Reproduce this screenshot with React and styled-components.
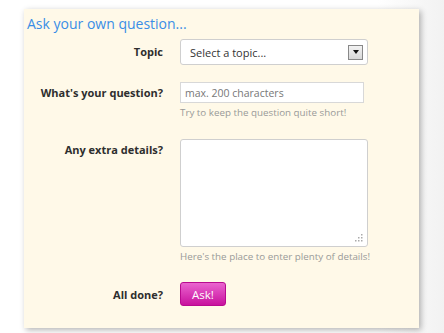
import React from 'react'
import styled, { createGlobalStyle } from 'styled-components'

const Global = createGlobalStyle`
  html, body {
    margin: 0;
    padding: 0;
    background: #ffffff;
    font-family: "Open Sans", "DejaVu Sans", sans-serif;
  }
`;

const Page = styled.div`
  width: 444px;
  height: 333px;
  padding: 9px 0 0 24px;
  box-sizing: border-box;
  background: linear-gradient(90deg, #ffffff 0%, #ffffff 85%, #f2f2f2 100%);
`;

const Panel = styled.div`
  width: 395px;
  height: 319px;
  box-sizing: border-box;
  background: #fff9e8;
  box-shadow: 2px 2px 6px rgba(0, 0, 0, 0.3);
  padding: 5px 0 0 3px;
`;

const Title = styled.h2`
  margin: 0;
  font-size: 14px;
  font-weight: 400;
  color: #3a8ee6;
  line-height: 20px;
`;

const Form = styled.form`
  display: grid;
  grid-template-columns: 136px 190px;
  column-gap: 17px;
  margin-top: 5px;
`;

const Label = styled.label`
  text-align: right;
  font-size: 11px;
  font-weight: 700;
  color: #2e2e2e;
  line-height: 14px;
  padding-top: ${p => p.$top || 0}px;
`;

const Field = styled.div`
  display: flex;
  flex-direction: column;
  margin-bottom: ${p => p.$gap || 0}px;
`;

const Select = styled.div`
  width: 188px;
  height: 26px;
  box-sizing: border-box;
  border: 1px solid #cfcfcf;
  border-radius: 3px;
  background: #fff;
  display: flex;
  align-items: center;
  justify-content: space-between;
  padding: 0 4px 0 9px;
  font-size: 11px;
  color: #333;
`;

const Arrow = styled.span`
  width: 15px;
  height: 15px;
  box-sizing: border-box;
  border: 1px solid #888;
  background: linear-gradient(#f2f2f2, #d8d8d8);
  display: flex;
  align-items: center;
  justify-content: center;
  &::after {
    content: '';
    border-left: 3px solid transparent;
    border-right: 3px solid transparent;
    border-top: 4px solid #111;
  }
`;

const Input = styled.input`
  width: 184px;
  height: 21px;
  box-sizing: border-box;
  border: 1px solid #d8d8d8;
  background: #fff;
  padding: 0 4px;
  font-family: inherit;
  font-size: 10.5px;
  color: #333;
  outline: none;
  &::placeholder {
    color: #777;
  }
`;

const Hint = styled.div`
  font-size: 9.8px;
  color: #999;
  margin-top: 4px;
  line-height: 12px;
  white-space: nowrap;
`;

const AreaWrap = styled.div`
  position: relative;
  width: 188px;
  height: 108px;
`;

const Area = styled.textarea`
  width: 100%;
  height: 100%;
  box-sizing: border-box;
  border: 1px solid #cfcfcf;
  border-radius: 3px;
  background: #fff;
  resize: none;
  outline: none;
`;

const Grip = styled.svg`
  position: absolute;
  right: 5px;
  bottom: 5px;
`;

const AskButton = styled.button`
  width: 46px;
  height: 24px;
  border: 1px solid #b80a8f;
  border-radius: 3px;
  background: linear-gradient(#ea64cf, #c8129e);
  color: #fff;
  font-family: inherit;
  font-size: 11.5px;
  padding: 0;
  cursor: pointer;
`;

const App = () => {
  return (
    <Page>
      <Global />
      <Panel>
        <Title>Ask your own question...</Title>
        <Form>
          <Label $top={6}>Topic</Label>
          <Field $gap={17}>
            <Select>
              <span>Select a topic...</span>
              <Arrow />
            </Select>
          </Field>

          <Label $top={4}>What's your question?</Label>
          <Field $gap={20}>
            <Input placeholder="max. 200 characters" />
            <Hint>Try to keep the question quite short!</Hint>
          </Field>

          <Label $top={4}>Any extra details?</Label>
          <Field $gap={19}>
            <AreaWrap>
              <Area />
              <Grip width="8" height="8" viewBox="0 0 8 8">
                <rect x="6" y="0" width="1.5" height="1.5" fill="#aaa" />
                <rect x="6" y="3" width="1.5" height="1.5" fill="#aaa" />
                <rect x="3" y="3" width="1.5" height="1.5" fill="#aaa" />
                <rect x="6" y="6" width="1.5" height="1.5" fill="#aaa" />
                <rect x="3" y="6" width="1.5" height="1.5" fill="#aaa" />
                <rect x="0" y="6" width="1.5" height="1.5" fill="#aaa" />
              </Grip>
            </AreaWrap>
            <Hint>Here's the place to enter plenty of details!</Hint>
          </Field>

          <Label $top={6}>All done?</Label>
          <Field>
            <AskButton type="button">Ask!</AskButton>
          </Field>
        </Form>
      </Panel>
    </Page>
  )
}

export default App;
